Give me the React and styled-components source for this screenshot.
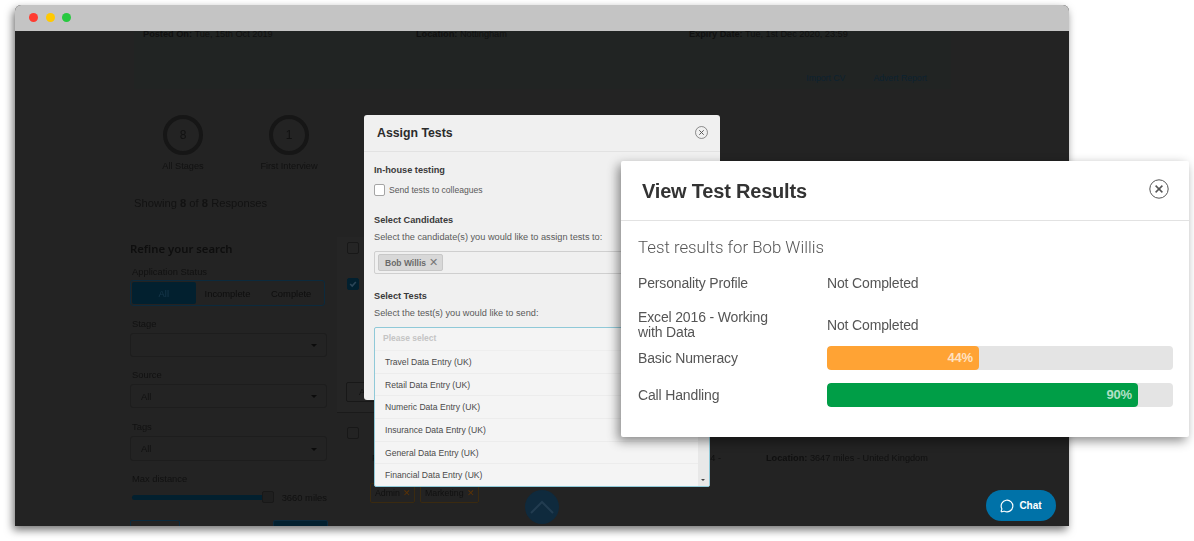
import React from "react";
import styled, { createGlobalStyle } from "styled-components";
import { MessageCircle } from "lucide-react";

const Global = createGlobalStyle`
  html, body {
    margin: 0;
    background: #ffffff;
    font-family: "Liberation Sans", Arial, sans-serif;
  }
`;
const Stage = styled.div`
  position: relative;
  width: 1194px;
  height: 541px;
  overflow: hidden;
  padding: 5px 0 0 15px;
  box-sizing: border-box;
`;
const Window = styled.div`
  position: relative;
  width: 1054px;
  height: 521px;
  border-radius: 6px 6px 0 0;
  background: #232323;
  box-shadow: -2px 4px 9px rgba(0, 0, 0, 0.55);
`;
const TitleBar = styled.div`
  height: 26px;
  background: #c4c4c4;
  border-radius: 6px 6px 0 0;
  display: flex;
  align-items: center;
  gap: 7.5px;
  padding-left: 14px;
  padding-bottom: 1px;
  box-sizing: border-box;
`;
const Dot = styled.span`
  width: 9px;
  height: 9px;
  border-radius: 50%;
  background: ${(props) => props.$color};
`;
const Page = styled.div`
  height: 495px;
  overflow: hidden;
  padding-left: 115px;
  box-sizing: border-box;
  color: #101010;
  filter: blur(0.35px);
`;
const Banner = styled.div`
  width: 817px;
  height: 58px;
  margin-left: 4px;
  background: #212423;
  padding: 0 9px;
  box-sizing: border-box;
  font-size: 9.2px;
  overflow: hidden;
`;
const BannerRow = styled.div`
  display: grid;
  grid-template-columns: 273px 273px 1fr;
  line-height: 14px;
  margin-top: -4px;
`;
const BannerLinks = styled.div`
  display: flex;
  justify-content: flex-end;
  gap: 28px;
  margin-top: 30px;
  padding-right: 15px;
  color: #0c2230;
  font-size: 8.7px;
  line-height: 14px;
`;
const Stats = styled.div`
  display: flex;
  margin-top: 26px;
`;
const Stat = styled.div`
  width: 106px;
  display: flex;
  flex-direction: column;
  align-items: center;
  font-size: 9.2px;
  line-height: 14px;
  color: #111;
`;
const Ring = styled.div`
  width: 40px;
  height: 40px;
  box-sizing: border-box;
  border: 4px solid #161616;
  border-radius: 50%;
  display: flex;
  align-items: center;
  justify-content: center;
  font-size: 12px;
  margin-bottom: 4px;
`;
const Showing = styled.div`
  margin: 22px 0 0 4px;
  font-size: 11.2px;
  line-height: 16px;
  color: #121212;
`;
const Columns = styled.div`
  display: grid;
  grid-template-columns: 207px 1fr;
  margin-top: 26px;
`;
const Sidebar = styled.div`
  padding-top: 4px;
`;
const SidebarTitle = styled.div`
  font-family: "Noto Sans", sans-serif;
  font-weight: 600;
  font-size: 11.3px;
  line-height: 16px;
  color: #0e0e0e;
`;
const FieldLabel = styled.div`
  font-size: 9.4px;
  line-height: 14px;
  padding-left: 2px;
  margin-top: ${(props) => props.$mt}px;
  color: #111;
`;
const Segments = styled.div`
  width: 195px;
  height: 26px;
  margin-top: 1px;
  box-sizing: border-box;
  border: 1px solid #0c2a3d;
  border-radius: 3px;
  padding: 1px;
  display: grid;
  grid-template-columns: repeat(3, 1fr);
  font-size: 9.4px;
`;
const Segment = styled.div`
  display: flex;
  align-items: center;
  justify-content: center;
  border-radius: 2px;
  background: ${(props) => (props.$active ? "#02202f" : "transparent")};
  color: ${(props) => (props.$active ? "#18384c" : "#0e0e0e")};
`;
const SelectBox = styled.div`
  position: relative;
  width: 197px;
  height: ${(props) => props.$h || 24}px;
  margin-top: 2px;
  box-sizing: border-box;
  border: 1px solid #1d1d1d;
  border-radius: 3px;
  display: flex;
  align-items: center;
  padding-left: 10px;
  font-size: 9.4px;
  color: #111;
  &::after {
    content: "";
    position: absolute;
    right: 9px;
    top: 50%;
    margin-top: -1px;
    border: 3px solid transparent;
    border-top-color: #0b0b0b;
    border-bottom: 0;
  }
`;
const SliderRow = styled.div`
  display: flex;
  align-items: center;
  width: 197px;
  height: 12px;
  margin-top: 5px;
  padding-left: 2px;
  box-sizing: border-box;
  font-size: 9.4px;
  white-space: nowrap;
`;
const SliderTrack = styled.div`
  width: 135px;
  height: 5px;
  border-radius: 3px;
  background: #02202f;
`;
const SliderThumb = styled.div`
  width: 10px;
  height: 10px;
  flex: none;
  margin-left: -2px;
  margin-right: 8px;
  background: #1f1f1f;
  border: 1px solid #181818;
  border-radius: 2px;
`;
const SideButtons = styled.div`
  display: flex;
  justify-content: space-between;
  width: 198px;
  margin-top: 17px;
`;
const SideButton = styled.div`
  width: ${(props) => props.$w}px;
  height: 26px;
  box-sizing: border-box;
  border: 1px solid #0c2a3d;
  border-radius: 2px;
  background: ${(props) => (props.$filled ? "#02202f" : "transparent")};
`;
const ResultsHead = styled.div`
  height: 176px;
  box-sizing: border-box;
  padding: 5px 0 0 10px;
  background: #252525;
  border-bottom: 1px solid #1a1a1a;
`;
const Check = styled.div`
  width: 12px;
  height: 12px;
  box-sizing: border-box;
  border-radius: 2px;
  border: 1px solid ${(props) => (props.$on ? "#02202f" : "#181818")};
  background: ${(props) => (props.$on ? "#02202f" : "transparent")};
  margin-top: ${(props) => props.$mt || 0}px;
  display: flex;
  align-items: center;
  justify-content: center;
`;
const OutlineBtn = styled.div`
  width: 60px;
  height: 20px;
  margin-top: 92px;
  margin-left: -1px;
  box-sizing: border-box;
  border: 1px solid #181818;
  border-radius: 2px;
  font-size: 9.4px;
  line-height: 18px;
  padding-left: 12px;
`;
const ResultBody = styled.div`
  padding: 14px 0 0 10px;
`;
const InfoRow = styled.div`
  display: flex;
  margin: 12px 0 0 25px;
  font-size: 9.2px;
  line-height: 14px;
  color: #101010;
`;
const InfoLeft = styled.div`
  width: 394px;
  padding-right: 45px;
  box-sizing: border-box;
  display: flex;
  justify-content: space-between;
`;
const PillRow = styled.div`
  display: flex;
  gap: 5px;
  margin: 18px 0 0 23px;
`;
const Pill = styled.div`
  height: 20px;
  box-sizing: border-box;
  padding: 0 3px 0 4px;
  border: 1px solid #3a2a10;
  border-radius: 2px;
  font-size: 8.8px;
  line-height: 18px;
  color: #111;
  & b {
    color: #5c3305;
    font-weight: 400;
    margin-left: 3px;
  }
`;
const UpButton = styled.div`
  position: absolute;
  left: 510px;
  top: 485px;
  width: 34px;
  height: 34px;
  border-radius: 50%;
  background: #0f2a3d;
  display: flex;
  align-items: center;
  justify-content: center;
`;
const ChatButton = styled.div`
  position: absolute;
  right: 13px;
  bottom: 5px;
  width: 70px;
  height: 31px;
  border-radius: 16px;
  background: #0072a8;
  color: #ffffff;
  font-weight: 700;
  font-size: 10px;
  display: flex;
  align-items: center;
  justify-content: center;
  gap: 5px;
`;

const AssignModal = styled.div`
  position: absolute;
  left: 349px;
  top: 110px;
  width: 356px;
  height: 285px;
  background: #f0f0f0;
  border-radius: 3px;
  color: #333;
`;
const AssignHeader = styled.div`
  height: 37px;
  box-sizing: border-box;
  border-bottom: 1px solid #e2e2e2;
  padding: 0 12px 1px 13px;
  display: flex;
  align-items: center;
  justify-content: space-between;
  font-size: 12.3px;
  font-weight: 700;
  color: #2b2b2b;
`;
const AssignBody = styled.div`
  padding: 12px 0 0 10px;
`;
const Heading = styled.div`
  font-size: 9.2px;
  font-weight: 700;
  line-height: 12px;
  color: #3a3a3a;
  margin-top: ${(props) => props.$mt || 0}px;
`;
const Hint = styled.div`
  font-size: 9.2px;
  line-height: 12px;
  color: #5a5a5a;
  margin-top: 5px;
`;
const CheckLine = styled.label`
  display: flex;
  align-items: center;
  gap: 4px;
  margin-top: 8px;
  font-size: 8.6px;
  line-height: 12px;
  color: #5a5a5a;
`;
const EmptyBox = styled.span`
  width: 11px;
  height: 12px;
  box-sizing: border-box;
  border: 1px solid #a5a5a5;
  border-radius: 2px;
  background: #fff;
`;
const TagInput = styled.div`
  width: 336px;
  height: 23px;
  margin-top: 8px;
  box-sizing: border-box;
  border: 1px solid #cfcfcf;
  border-radius: 2px;
  padding: 2px 3px;
  display: flex;
`;
const Chip = styled.div`
  width: 65px;
  height: 17px;
  box-sizing: border-box;
  background: #d8d8d8;
  border: 1px solid #c8c8c8;
  border-radius: 2px;
  padding-left: 6px;
  font-size: 8.5px;
  font-weight: 700;
  line-height: 15px;
  color: #6a6a6a;
  & span {
    font-weight: 400;
    font-size: 11px;
    margin-left: 3px;
    color: #777;
  }
`;
const Dropdown = styled.div`
  position: relative;
  width: 336px;
  height: 160px;
  margin-top: 8px;
  box-sizing: border-box;
  border: 1px solid #8fc9d8;
  border-radius: 2px;
  background: #f4f4f4;
  overflow: hidden;
`;
const Placeholder = styled.div`
  height: 22px;
  padding-left: 8px;
  font-size: 8.5px;
  font-weight: 700;
  line-height: 21px;
  color: #c4c4c4;
  border-bottom: 1px solid #eeeeee;
`;
const Option = styled.div`
  height: 22.7px;
  box-sizing: border-box;
  padding-left: 10px;
  font-size: 8.6px;
  line-height: 22px;
  color: #4a4a4a;
  border-bottom: 1px solid #ececec;
`;
const ScrollBar = styled.div`
  position: absolute;
  right: 0;
  top: 0;
  bottom: 0;
  width: 11px;
  background: #e8e8e8;
  &::after {
    content: "";
    position: absolute;
    left: 3px;
    bottom: 5px;
    border: 2.5px solid transparent;
    border-top-color: #444;
    border-bottom: 0;
  }
`;

const ResultsModal = styled.div`
  position: absolute;
  left: 621px;
  top: 161px;
  width: 568px;
  height: 276px;
  background: #ffffff;
  border-radius: 2px;
  box-shadow: -3px 4px 11px rgba(0, 0, 0, 0.45);
  color: #555;
`;
const ResultsHeader = styled.div`
  height: 60px;
  box-sizing: border-box;
  border-bottom: 1px solid #e2e2e2;
  padding: 0 20px 4px 21px;
  display: flex;
  align-items: center;
  justify-content: space-between;
  font-size: 20px;
  letter-spacing: -0.2px;
  font-weight: 700;
  color: #333;
`;
const ResultsTitle = styled.span`
  padding-top: 6px;
`;
const ResultsBody = styled.div`
  padding: 16px 16px 0 17px;
`;
const Subtitle = styled.div`
  font-family: "Roboto", sans-serif;
  font-weight: 300;
  font-size: 16.8px;
  line-height: 20px;
  color: #555;
  margin-bottom: 18px;
`;
const TestRow = styled.div`
  display: grid;
  grid-template-columns: 189px 346px;
  align-items: center;
  font-size: 14px;
  letter-spacing: -0.15px;
  line-height: 15px;
  min-height: 16px;
  margin-top: ${(props) => props.$mt}px;
`;
const TestName = styled.div`
  width: 140px;
`;
const Bar = styled.div`
  height: 24px;
  border-radius: 4px;
  background: #e4e4e4;
  overflow: hidden;
`;
const BarFill = styled.div`
  height: 100%;
  width: ${(props) => props.$width}px;
  border-radius: 4px;
  background: ${(props) => props.$color};
  color: rgba(255, 255, 255, 0.7);
  font-weight: 700;
  font-size: 13px;
  line-height: 24px;
  text-align: right;
  padding-right: 6px;
  box-sizing: border-box;
`;

function CloseIcon({ size, color }) {
  return (
    <svg width={size} height={size} viewBox="0 0 20 20" fill="none" stroke={color}>
      <circle cx="10" cy="10" r="9.2" strokeWidth="1" />
      <path d="M6.6 6.6l6.8 6.8M13.4 6.6l-6.8 6.8" strokeWidth="1.5" />
    </svg>
  );
}

const options = [
  "Travel Data Entry (UK)",
  "Retail Data Entry (UK)",
  "Numeric Data Entry (UK)",
  "Insurance Data Entry (UK)",
  "General Data Entry (UK)",
  "Financial Data Entry (UK)",
];

export default function App() {
  return (
    <Stage>
      <Global />
      <Window>
        <TitleBar>
          <Dot $color="#ff3b30" />
          <Dot $color="#ffc900" />
          <Dot $color="#27c93f" />
        </TitleBar>
        <Page>
          <Banner>
            <BannerRow>
              <span>
                <b>Posted On:</b> Tue, 15th Oct 2019
              </span>
              <span>
                <b>Location:</b> Nottingham
              </span>
              <span>
                <b>Expiry Date:</b> Tue, 1st Dec 2020, 23:59
              </span>
            </BannerRow>
            <BannerLinks>
              <span>Import CV</span>
              <span>Advert Report</span>
            </BannerLinks>
          </Banner>
          <Stats>
            <Stat>
              <Ring>8</Ring>
              All Stages
            </Stat>
            <Stat>
              <Ring>1</Ring>
              First Interview
            </Stat>
          </Stats>
          <Showing>
            Showing <b>8</b> of <b>8</b> Responses
          </Showing>
          <Columns>
            <Sidebar>
              <SidebarTitle>Refine your search</SidebarTitle>
              <FieldLabel $mt={8}>Application Status</FieldLabel>
              <Segments>
                <Segment $active>All</Segment>
                <Segment>Incomplete</Segment>
                <Segment>Complete</Segment>
              </Segments>
              <FieldLabel $mt={11}>Stage</FieldLabel>
              <SelectBox />
              <FieldLabel $mt={11}>Source</FieldLabel>
              <SelectBox>All</SelectBox>
              <FieldLabel $mt={12}>Tags</FieldLabel>
              <SelectBox $h={25}>All</SelectBox>
              <FieldLabel $mt={11}>Max distance</FieldLabel>
              <SliderRow>
                <SliderTrack />
                <SliderThumb />
                3660 miles
              </SliderRow>
              <SideButtons>
                <SideButton $w={50} />
                <SideButton $w={55} $filled />
              </SideButtons>
            </Sidebar>
            <div>
              <ResultsHead>
                <Check />
                <Check $on $mt={24}>
                  <svg width="8" height="8" viewBox="0 0 10 10" fill="none" stroke="#2c4658" strokeWidth="2">
                    <path d="M1.5 5l2.5 2.5 4.5-5" />
                  </svg>
                </Check>
                <OutlineBtn>A</OutlineBtn>
              </ResultsHead>
              <ResultBody>
                <Check />
                <InfoRow>
                  <InfoLeft>
                    <span>Fri</span>
                    <span>10:34 -</span>
                  </InfoLeft>
                  <span>
                    <b>Location:</b> 3647 miles - United Kingdom
                  </span>
                </InfoRow>
                <PillRow>
                  <Pill>
                    Admin<b>✕</b>
                  </Pill>
                  <Pill>
                    Marketing<b>✕</b>
                  </Pill>
                </PillRow>
              </ResultBody>
            </div>
          </Columns>
        </Page>
        <UpButton>
          <svg width="26" height="16" viewBox="0 0 26 16" fill="none" stroke="#223c50" strokeWidth="2">
            <path d="M2 14L13 3l11 11" />
          </svg>
        </UpButton>
        <ChatButton>
          <MessageCircle size={14} strokeWidth={2} />
          Chat
        </ChatButton>
        <AssignModal>
          <AssignHeader>
            Assign Tests
            <CloseIcon size={13} color="#555" />
          </AssignHeader>
          <AssignBody>
            <Heading>In-house testing</Heading>
            <CheckLine>
              <EmptyBox />
              Send tests to colleagues
            </CheckLine>
            <Heading $mt={18}>Select Candidates</Heading>
            <Hint>Select the candidate(s) you would like to assign tests to:</Hint>
            <TagInput>
              <Chip>
                Bob Willis<span>✕</span>
              </Chip>
            </TagInput>
            <Heading $mt={16}>Select Tests</Heading>
            <Hint>Select the test(s) you would like to send:</Hint>
            <Dropdown>
              <Placeholder>Please select</Placeholder>
              {options.map((name) => (
                <Option key={name}>{name}</Option>
              ))}
              <ScrollBar />
            </Dropdown>
          </AssignBody>
        </AssignModal>
      </Window>
      <ResultsModal>
        <ResultsHeader>
          <ResultsTitle>View Test Results</ResultsTitle>
          <CloseIcon size={20} color="#555" />
        </ResultsHeader>
        <ResultsBody>
          <Subtitle>Test results for Bob Willis</Subtitle>
          <TestRow $mt={0}>
            <TestName>Personality Profile</TestName>
            <span>Not Completed</span>
          </TestRow>
          <TestRow $mt={19}>
            <TestName>Excel 2016 - Working with Data</TestName>
            <span>Not Completed</span>
          </TestRow>
          <TestRow $mt={6}>
            <TestName>Basic Numeracy</TestName>
            <Bar>
              <BarFill $width={152} $color="#ffa334">
                44%
              </BarFill>
            </Bar>
          </TestRow>
          <TestRow $mt={13}>
            <TestName>Call Handling</TestName>
            <Bar>
              <BarFill $width={311} $color="#009e47">
                90%
              </BarFill>
            </Bar>
          </TestRow>
        </ResultsBody>
      </ResultsModal>
    </Stage>
  );
}
